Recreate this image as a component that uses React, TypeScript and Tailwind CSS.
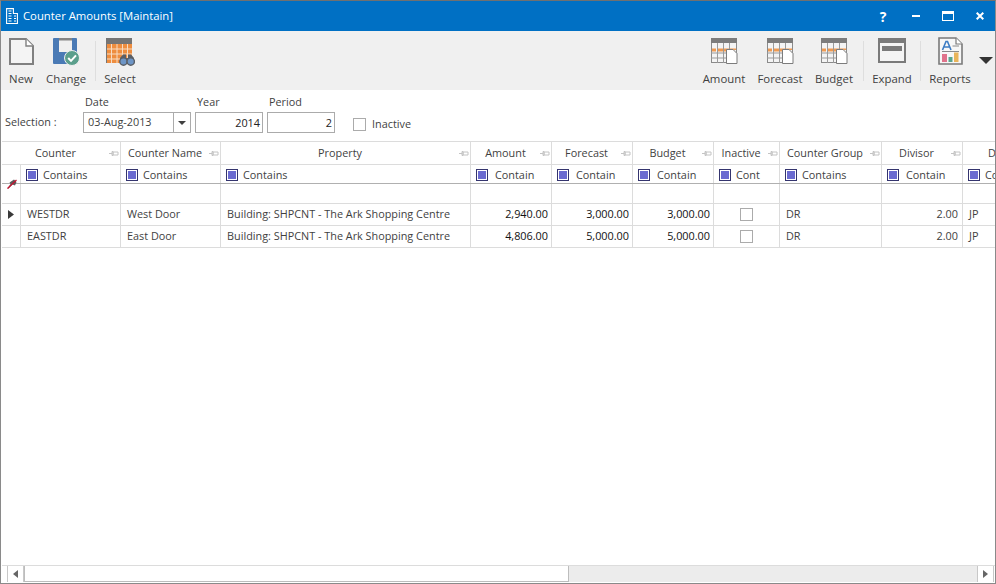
import React from 'react'

const GRID = 'grid grid-cols-[19px_100px_100px_250px_81px_81px_81px_66px_102px_81px_60px]'

type Col = { title: string; filter: string; filterPad?: string }

const cols: Col[] = [
  { title: 'Counter', filter: 'Contains' },
  { title: 'Counter Name', filter: 'Contains' },
  { title: 'Property', filter: 'Contains' },
  { title: 'Amount', filter: 'Contain', filterPad: 'pl-[2px]' },
  { title: 'Forecast', filter: 'Contain', filterPad: 'pl-[2px]' },
  { title: 'Budget', filter: 'Contain', filterPad: 'pl-[2px]' },
  { title: 'Inactive', filter: 'Cont' },
  { title: 'Counter Group', filter: 'Contains' },
  { title: 'Divisor', filter: 'Contain', filterPad: 'pl-[2px]' },
  { title: 'D', filter: 'Co' },
]

const rows = [
  { code: 'WESTDR', name: 'West Door', amount: '2,940.00', forecast: '3,000.00', budget: '3,000.00' },
  { code: 'EASTDR', name: 'East Door', amount: '4,806.00', forecast: '5,000.00', budget: '5,000.00' },
]

function NewIcon() {
  return (
    <svg width="25" height="27" viewBox="0 0 25 27" fill="none">
      <path d="M1 1H17L24 8V26H1Z" fill="#f4f4f4" stroke="#808080" strokeWidth="2" />
      <path d="M17 1V8H24" fill="#fff" stroke="#808080" strokeWidth="1.4" />
    </svg>
  )
}

function ChangeIcon() {
  return (
    <svg width="27" height="28" viewBox="0 0 27 28" fill="none">
      <rect x="0" y="0" width="24" height="26" rx="1" fill="#4a7ab5" />
      <rect x="6" y="0" width="13" height="14" fill="#f0f0f0" />
      <rect x="6" y="0" width="13" height="2.5" fill="#858585" />
      <circle cx="19" cy="20" r="7.5" fill="#5b9f8c" stroke="#f0f0f0" strokeWidth="1" />
      <path d="M15.2 20L18 22.9L23 17.3" stroke="#fff" strokeWidth="2" fill="none" />
    </svg>
  )
}

function SelectIcon() {
  return (
    <svg width="29" height="28" viewBox="0 0 29 28" fill="none">
      <rect x="0" y="0" width="26" height="25" fill="#ee8d3f" />
      <rect x="0" y="0" width="26" height="6" fill="#757575" />
      <path d="M5.5 6V25M11 6V25M16.5 6V25M21.5 6V25M0 11H26M0 16H26M0 21H26" stroke="#f7dcc3" strokeWidth="1" />
      <rect x="0" y="6" width="1" height="19" fill="#757575" />
      <path d="M14 20L17 16.5H20V20H22V16.5H25L28 20V25H14Z" fill="#5a5f66" />
      <circle cx="17.5" cy="23.5" r="3.7" fill="#6d95c6" stroke="#5a5f66" strokeWidth="1.4" />
      <circle cx="24.7" cy="23.5" r="3.7" fill="#6d95c6" stroke="#5a5f66" strokeWidth="1.4" />
    </svg>
  )
}

function GridDocIcon() {
  return (
    <svg width="27" height="26" viewBox="0 0 27 26" fill="none">
      <rect x="0.5" y="0.5" width="25" height="24" fill="#f4f4f4" stroke="#8a8a8a" />
      <rect x="0" y="0" width="26" height="5" fill="#7c7c7c" />
      <path d="M6.5 5V25M12.5 5V25M18.5 5V25M0 15H26M0 20H26" stroke="#9a9a9a" strokeWidth="1" />
      <rect x="1" y="10.5" width="4" height="3" fill="#ee9a52" />
      <rect x="7" y="10.5" width="5" height="3" fill="#ee9a52" />
      <rect x="13" y="10.5" width="5" height="3" fill="#ee9a52" />
      <rect x="19" y="10.5" width="6" height="1.5" fill="#ee9a52" />
      <path d="M15.5 11.5H22L26 15.5V25.5H15.5Z" fill="#fff" stroke="#7c7c7c" />
    </svg>
  )
}

function ExpandIcon() {
  return (
    <svg width="28" height="25" viewBox="0 0 28 25" fill="none">
      <rect x="1" y="1" width="26" height="23" fill="#f4f4f4" stroke="#7a7a7a" strokeWidth="2" />
      <rect x="0" y="0" width="28" height="5" fill="#7a7a7a" />
      <rect x="4" y="8" width="20" height="5" fill="#7a7a7a" />
    </svg>
  )
}

function ReportsIcon() {
  return (
    <svg width="25" height="28" viewBox="0 0 25 28" fill="none" className="-mt-[1px]">
      <path d="M1 1H18L24 7V27H1Z" fill="#f7f7f7" stroke="#7a7a7a" strokeWidth="1.6" />
      <path d="M18 1V7H24" stroke="#7a7a7a" strokeWidth="1.2" fill="#fff" />
      <path d="M4.5 13L8 4.5H9.5L13 13M6 10H11.5" stroke="#3d7cc4" strokeWidth="1.6" fill="none" />
      <path d="M14.5 9H21M4 14.5H21" stroke="#8a8a8a" strokeWidth="1" />
      <rect x="4" y="17" width="5" height="8" fill="#e0738b" />
      <rect x="10.5" y="20" width="4" height="5" fill="#5aa58e" />
      <rect x="16" y="15.5" width="4.5" height="9.5" fill="#e9b45a" />
    </svg>
  )
}

function ToolButton({ label, icon, className }: { label: string; icon: React.ReactNode; className: string }) {
  return (
    <div className={`flex flex-col items-center ${className}`}>
      <div className="h-[30px] flex items-start justify-center">{icon}</div>
      <span className="mt-[2px] leading-[17px] text-[11.4px] text-[#3f3f3f] whitespace-nowrap">{label}</span>
    </div>
  )
}

function PinIcon() {
  return (
    <svg width="10" height="7" viewBox="0 0 10 7" className="shrink-0">
      <path d="M0 3.5H3M3 1.5H4V5.5H3ZM4 2H9V5H4Z" stroke="#c4c4c4" strokeWidth="1" fill="none" />
    </svg>
  )
}

function FilterBox() {
  return (
    <span className="w-[12px] h-[12px] border border-[#34346e] flex items-center justify-center shrink-0">
      <span className="w-[8px] h-[8px] bg-[#6a6ad0] block" />
    </span>
  )
}

function Check() {
  return <span className="w-[13px] h-[13px] border border-[#ababab] bg-white block" />
}

export default function App() {
  return (
    <div className="w-[996px] h-[584px] flex flex-col bg-white border border-[#8a8a8a] border-t-[#707070] overflow-hidden text-[10.85px] text-[#3f3f3f] font-['Open_Sans','Noto_Sans',sans-serif]">
      {/* title bar */}
      <div className="h-[30px] shrink-0 bg-[#0070c4] flex items-center pl-[5px] text-white">
        <svg width="12" height="16" viewBox="0 0 12 16" fill="none" className="mr-[5px]">
          <path d="M0.6 15.5V0.6H7.4V5.5H11.4V15.5Z" stroke="#fff" strokeWidth="1.1" />
          <path d="M2.5 3H5.5M2.5 5.5H5.5M2.5 8H5.5M2.5 10.5H5.5M2.5 13H5.5M8 8H10M8 10.5H10M8 13H10" stroke="#fff" strokeWidth="1.2" />
        </svg>
        <span className="text-[11.3px]">Counter Amounts [Maintain]</span>
        <div className="ml-auto flex items-center h-full">
          <span className="w-[20px] text-center text-[14px] font-bold mr-[19px]">?</span>
          <span className="w-[8px] h-[2px] bg-white mr-[22px]" />
          <span className="w-[12px] h-[10px] border border-white border-t-[3px] mr-[22px]" />
          <svg width="8" height="8" viewBox="0 0 8 8" className="mr-[11px]">
            <path d="M0.7 0.7L7.3 7.3M7.3 0.7L0.7 7.3" stroke="#fff" strokeWidth="2" />
          </svg>
        </div>
      </div>

      {/* toolbar */}
      <div className="h-[59px] shrink-0 bg-[#f0f0f0] flex items-start pt-[7px]">
        <ToolButton label="New" icon={<NewIcon />} className="w-[26px] ml-[7px]" />
        <ToolButton label="Change" icon={<ChangeIcon />} className="w-[46px] ml-[9px]" />
        <div className="w-px h-[40px] bg-[#dedede] ml-[6px] mt-[3px]" />
        <ToolButton label="Select" icon={<SelectIcon />} className="w-[40px] ml-[4px]" />
        <div className="ml-auto flex items-start">
          <ToolButton label="Amount" icon={<GridDocIcon />} className="w-[44px]" />
          <ToolButton label="Forecast" icon={<GridDocIcon />} className="w-[46px] ml-[11px]" />
          <ToolButton label="Budget" icon={<GridDocIcon />} className="w-[40px] ml-[11px]" />
          <div className="w-px h-[40px] bg-[#dedede] ml-[9px] mt-[3px]" />
          <ToolButton label="Expand" icon={<ExpandIcon />} className="w-[40px] ml-[8px]" />
          <div className="w-px h-[40px] bg-[#dedede] ml-[8px] mt-[3px]" />
          <ToolButton label="Reports" icon={<ReportsIcon />} className="w-[42px] ml-[8px]" />
          <svg width="14" height="7" viewBox="0 0 14 7" className="ml-[8px] mt-[19px] mr-[2px]">
            <path d="M0 0H14L7 7Z" fill="#333" />
          </svg>
        </div>
      </div>

      {/* selection */}
      <div className="h-[51px] shrink-0 flex items-start pl-[4px] pt-[4px]">
        <span className="w-[78px] mt-[20px] leading-[16px]">Selection :</span>
        <div className="flex flex-col w-[108px]">
          <span className="pl-[2px] h-[18px] leading-[16px]">Date</span>
          <div className="w-[108px] h-[21px] border border-[#ababab] flex items-center">
            <span className="flex-1 pl-[4px]">03-Aug-2013</span>
            <span className="w-[17px] h-full border-l border-[#ababab] flex items-center justify-center">
              <svg width="8" height="4" viewBox="0 0 8 4"><path d="M0 0H8L4 4Z" fill="#404040" /></svg>
            </span>
          </div>
        </div>
        <div className="flex flex-col w-[68px] ml-[4px]">
          <span className="pl-[2px] h-[18px] leading-[16px]">Year</span>
          <div className="h-[21px] border border-[#ababab] text-right pr-[2px] leading-[20px] text-[#222]">2014</div>
        </div>
        <div className="flex flex-col w-[68px] ml-[4px]">
          <span className="pl-[2px] h-[18px] leading-[16px]">Period</span>
          <div className="h-[21px] border border-[#ababab] text-right pr-[2px] leading-[20px] text-[#222]">2</div>
        </div>
        <div className="flex items-center ml-[18px] mt-[22px]">
          <Check />
          <span className="ml-[6px] leading-[16px]">Inactive</span>
        </div>
      </div>

      {/* grid */}
      <div className="flex-1 min-h-0 overflow-hidden border-t border-[#dcdcdc] ml-px">
        <div className={`${GRID} h-[23px] border-b border-[#dcdcdc]`}>
          {cols.map((c, i) => (
            <div key={c.title} className={`${i === 0 ? 'col-span-2' : ''} border-r border-[#dcdcdc] flex items-center pr-[1px] overflow-hidden`}>
              <span className="flex-1 text-center whitespace-nowrap">{c.title}</span>
              {c.title !== 'D' && <PinIcon />}
            </div>
          ))}
        </div>
        <div className={`${GRID} h-[19px] border-b border-[#b0b0b0]`}>
          <div className="border-r border-[#dcdcdc]" />
          {cols.map((c) => (
            <div key={c.title} className="border-r border-[#dcdcdc] flex items-center pl-[5px] pt-[2px] overflow-hidden">
              <FilterBox />
              <span className={`ml-[5px] whitespace-nowrap ${c.filterPad ?? ''}`}>{c.filter}</span>
            </div>
          ))}
        </div>
        <div className={`${GRID} h-[20px] border-b border-[#dcdcdc] relative`}>
          <div className="border-r border-[#dcdcdc]" />
          {cols.map((c) => (
            <div key={c.title} className="border-r border-[#dcdcdc]" />
          ))}
          {/* clear-filter pin sits across the filter and add rows */}
          <svg width="10" height="10" viewBox="0 0 10 10" className="absolute left-[5px] top-[-5px]">
            <path d="M0.5 9.5L3.5 5L2.5 3.5L7 0.5L9.5 3L8 6.5L5.5 5.5L1.5 9.5Z" fill="#5c5c5c" />
            <path d="M0.5 9.5L9.5 1" stroke="#c8102e" strokeWidth="1.2" />
          </svg>
        </div>
        {rows.map((r, i) => (
          <div key={r.code} className={`${GRID} h-[22px] border-b border-[#dcdcdc]`}>
            <div className="border-r border-[#dcdcdc] flex items-center justify-center">
              {i === 0 && (
                <svg width="6" height="9" viewBox="0 0 6 9"><path d="M0 0L6 4.5L0 9Z" fill="#3a3a3a" /></svg>
              )}
            </div>
            <div className="border-r border-[#dcdcdc] pl-[6px] leading-[19px]">{r.code}</div>
            <div className="border-r border-[#dcdcdc] pl-[6px] leading-[19px]">{r.name}</div>
            <div className="border-r border-[#dcdcdc] pl-[6px] leading-[19px] whitespace-nowrap">Building: SHPCNT - The Ark Shopping Centre</div>
            <div className="border-r border-[#dcdcdc] pr-[3px] leading-[19px] text-right text-[#111]">{r.amount}</div>
            <div className="border-r border-[#dcdcdc] pr-[3px] leading-[19px] text-right text-[#111]">{r.forecast}</div>
            <div className="border-r border-[#dcdcdc] pr-[3px] leading-[19px] text-right text-[#111]">{r.budget}</div>
            <div className="border-r border-[#dcdcdc] flex items-center justify-center"><Check /></div>
            <div className="border-r border-[#dcdcdc] pl-[6px] leading-[19px]">DR</div>
            <div className="border-r border-[#dcdcdc] pr-[4px] leading-[19px] text-right">2.00</div>
            <div className="pl-[6px] leading-[19px]">JP</div>
          </div>
        ))}
      </div>

      {/* horizontal scrollbar */}
      <div className="h-[17px] shrink-0 flex bg-[#ececec] border-t border-[#dcdcdc] ml-[1px] mb-[1px]">
        <div className="w-[5px] bg-white" />
        <div className="w-[17px] border-x border-[#c8c8c8] bg-white flex items-center justify-center">
          <svg width="5" height="8" viewBox="0 0 5 8"><path d="M5 0V8L0 4Z" fill="#666" /></svg>
        </div>
        <div className="w-[545px] bg-white border border-[#bdbdbd] border-t-0" />
        <div className="flex-1" />
        <div className="w-[17px] border-x border-[#c8c8c8] bg-white flex items-center justify-center">
          <svg width="5" height="8" viewBox="0 0 5 8"><path d="M0 0V8L5 4Z" fill="#666" /></svg>
        </div>
        <div className="w-[1px] bg-white" />
      </div>
    </div>
  )
}
